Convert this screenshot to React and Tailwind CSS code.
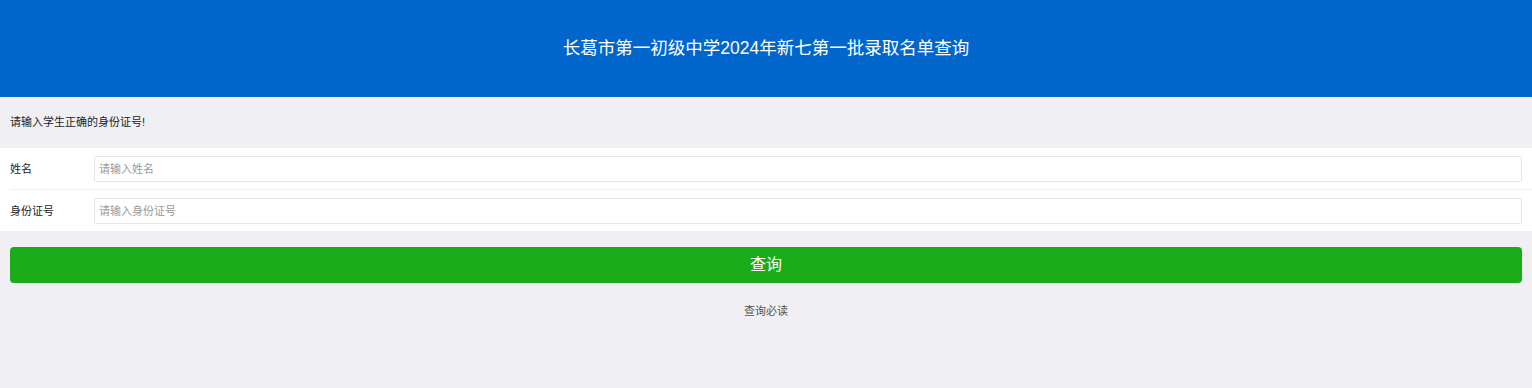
import React from 'react';

const font = { fontFamily: '"Liberation Sans", "Noto Sans CJK SC", sans-serif' };

const Field = ({ label, placeholder, divider }) => (
  <div className={`relative flex items-center pl-[10px] pr-[10px] ${divider ? 'h-[42px] pb-px' : 'h-[41px]'}`}>
    <label className="w-[84px] shrink-0 text-[11px] text-[#222] pt-[2px]">{label}</label>
    <input
      className="flex-1 h-[26px] border border-[#e8e8e8] rounded-[2px] px-[4px] text-[11px] text-[#333] placeholder:text-[#999] outline-none bg-white"
      placeholder={placeholder}
    />
    {divider && <div className="absolute left-[10px] right-0 bottom-0 h-px bg-[#f0f0f0]"></div>}
  </div>
);

export default function App() {
  return (
    <div className="min-h-[388px] bg-[#efeff4]" style={font}>
      {/* Header */}
      <div className="h-[97px] bg-[#0066cc] flex items-center justify-center">
        <h1 className="text-white text-[17.5px] font-normal">长葛市第一初级中学2024年新七第一批录取名单查询</h1>
      </div>

      {/* Tip */}
      <div className="h-[51px] flex items-center px-[10px] text-[11px] text-[#222]">
        请输入学生正确的身份证号!
      </div>

      {/* Form */}
      <div className="bg-white">
        <Field label="姓名" placeholder="请输入姓名" divider />
        <Field label="身份证号" placeholder="请输入身份证号" />
      </div>

      {/* Submit */}
      <div className="px-[10px] pt-[16px]">
        <button className="w-full h-[36px] rounded-[4px] bg-[#1aad19] text-white text-[16px]">查询</button>
      </div>

      <div className="text-center text-[11px] text-[#555] mt-[20px]">查询必读</div>
    </div>
  );
}
